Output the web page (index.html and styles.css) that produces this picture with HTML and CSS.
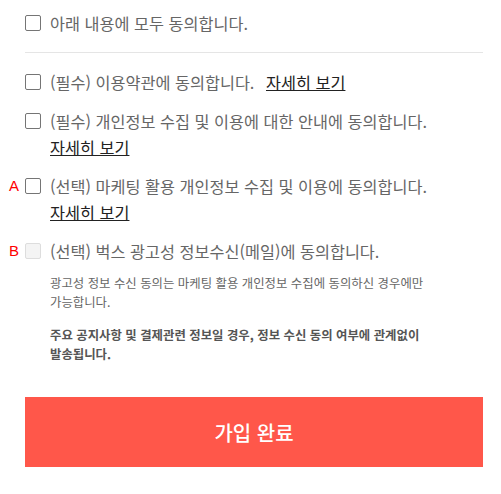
FILE: index.html
```html
<!DOCTYPE html>
<html lang="ko">
  <head>
    <meta charset="UTF-8" />
    <meta name="viewport" content="width=device-width, initial-scale=1.0" />
    <link rel="stylesheet" href="styles.css">
    <title>약관 동의</title>
  </head>
  <body>
    <div class="terms">
      <label class="term term-all">
        <input type="checkbox" />
        <span class="term-text">아래 내용에 모두 동의합니다.</span>
      </label>

      <div class="term-list">
        <label class="term">
          <input type="checkbox" />
          <span class="term-text">(필수) 이용약관에 동의합니다. <a href="#" class="more">자세히 보기</a></span>
        </label>
        <label class="term">
          <input type="checkbox" />
          <span class="term-text">(필수) 개인정보 수집 및 이용에 대한 안내에 동의합니다.<br /><a href="#" class="more">자세히 보기</a></span>
        </label>
        <label class="term">
          <span class="mark">A</span>
          <input type="checkbox" />
          <span class="term-text">(선택) 마케팅 활용 개인정보 수집 및 이용에 동의합니다.<br /><a href="#" class="more">자세히 보기</a></span>
        </label>
        <label class="term">
          <span class="mark">B</span>
          <input type="checkbox" disabled />
          <span class="term-text">(선택) 벅스 광고성 정보수신(메일)에 동의합니다.</span>
        </label>
        <div class="notice">
          <p>광고성 정보 수신 동의는 마케팅 활용 개인정보 수집에 동의하신 경우에만 가능합니다.</p>
          <p class="strong">주요 공지사항 및 결제관련 정보일 경우, 정보 수신 동의 여부에 관계없이 발송됩니다.</p>
        </div>
      </div>

      <button class="btn-submit">가입 완료</button>
    </div>
  </body>
</html>
```

FILE: styles.css
```css
body {
  margin: 0;
  font-family: "Noto Sans CJK KR", "Noto Sans", sans-serif;
  background: #fff;
  color: #666;
  word-break: keep-all;
}
.terms {
  width: 458px;
  margin-left: 25px;
  padding-top: 10px;
}
.term {
  position: relative;
  display: flex;
  align-items: flex-start;
  font-size: 16.3px;
  line-height: 26px;
  cursor: pointer;
}
.term input {
  flex: none;
  width: 16px;
  height: 16px;
  margin: 5px 9px 0 0;
  border: 1px solid #757575;
  border-radius: 2px;
  appearance: none;
  background: #fff;
}
.term input:disabled {
  border-color: #ddd;
  background: #f4f4f4;
}
.term-all {
  padding-bottom: 16px;
  border-bottom: 1px solid #e5e5e5;
}
.term-list {
  padding-top: 16px;
  display: flex;
  flex-direction: column;
  gap: 13px;
}
.more {
  color: #222;
  text-decoration: underline;
  margin-left: 7px;
}
.term-text br + .more {
  margin-left: 0;
}
.mark {
  position: absolute;
  left: -16px;
  top: 0;
  color: #f00;
  font-family: "Liberation Sans", sans-serif;
  font-size: 15px;
}
.notice {
  width: 390px;
  padding-left: 25px;
  margin-top: -3px;
}
.notice p {
  margin: 0 0 14px;
  font-size: 12.4px;
  line-height: 19px;
  color: #666;
}
.notice .strong {
  font-weight: bold;
  color: #555;
}
.btn-submit {
  display: block;
  width: 100%;
  height: 70px;
  margin-top: 19px;
  border: none;
  background: #ff574a;
  color: #fff;
  font-family: inherit;
  font-size: 20px;
  font-weight: 500;
  cursor: pointer;
}
```
